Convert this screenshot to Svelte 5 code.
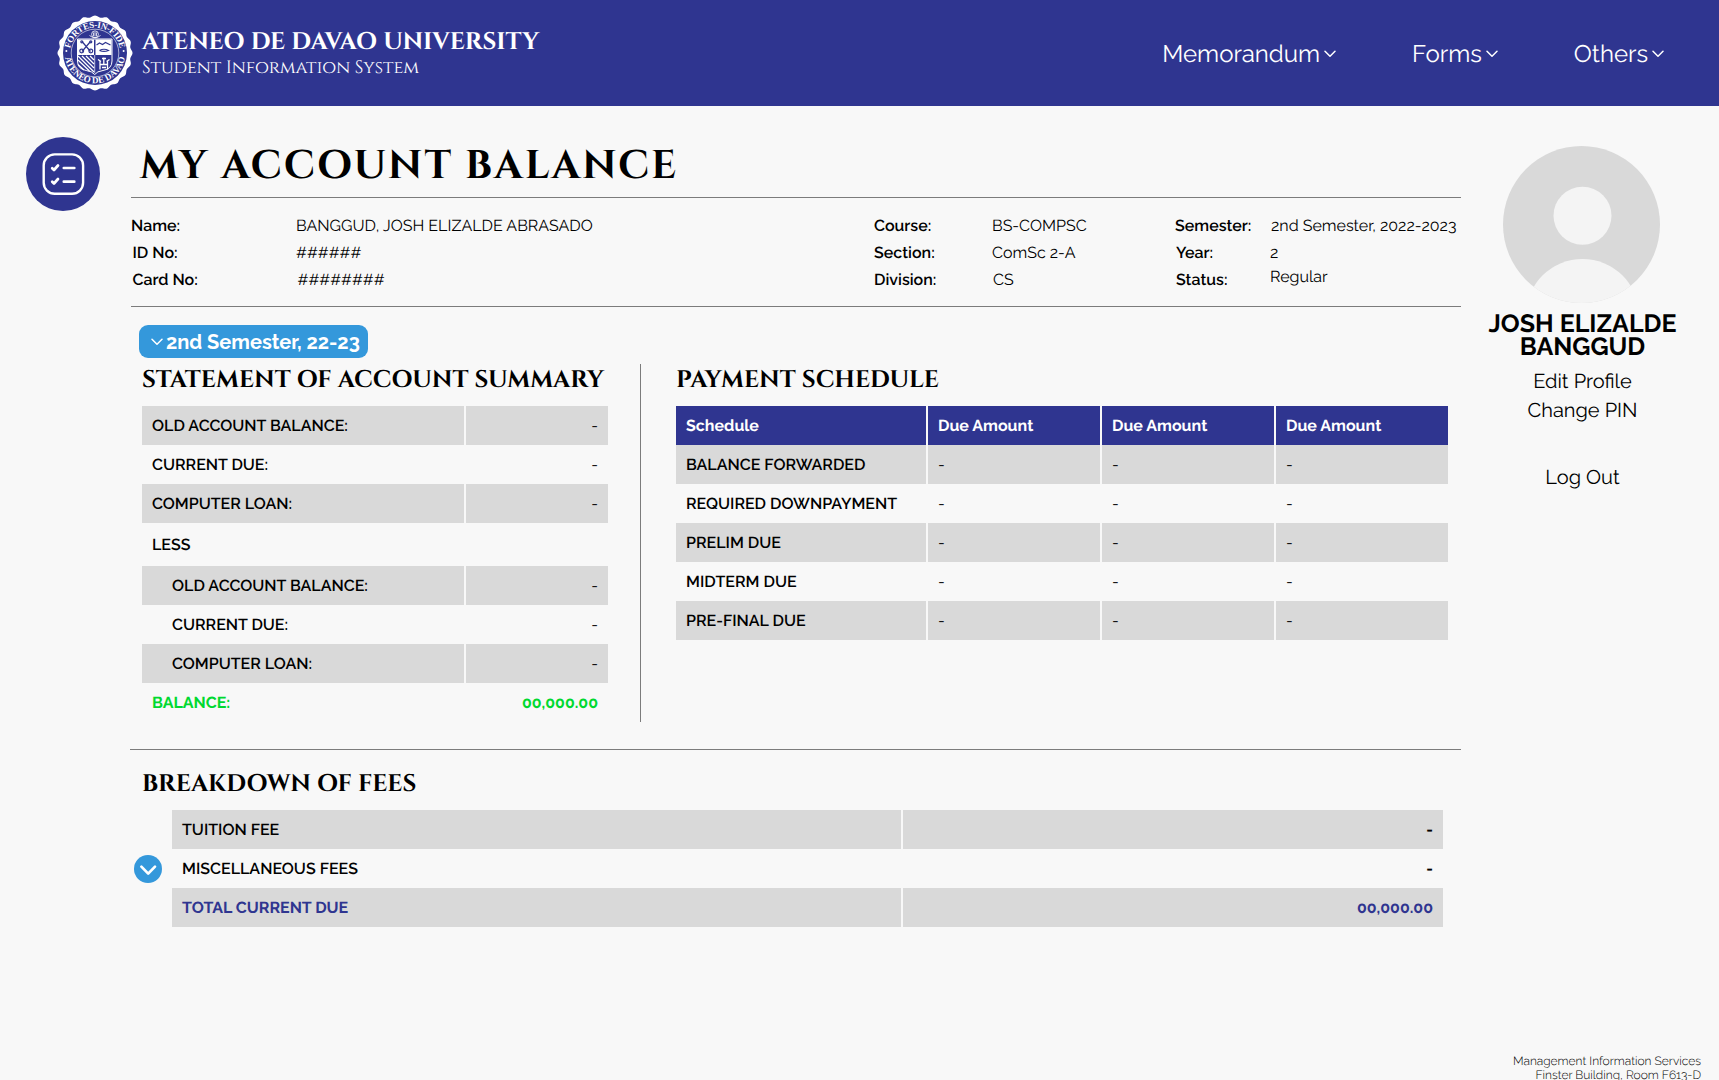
<script>
  const menus = ['Memorandum', 'Forms', 'Others'];

  const details = [
    [{ t: 'Name:' }, { t: 'BANGGUD, JOSH ELIZALDE ABRASADO' }, { t: 'Course:' }, { t: 'BS-COMPSC' }, { t: 'Semester:' }, { t: '2nd Semester, 2022-2023', nudge: 'one' }],
    [{ t: 'ID No:', nudge: 'more' }, { t: '######' }, { t: 'Section:' }, { t: 'ComSc 2-A' }, { t: 'Year:', nudge: 'one' }, { t: '2' }],
    [{ t: 'Card No:', nudge: 'more' }, { t: '########', nudge: 'more' }, { t: 'Division:' }, { t: 'CS', nudge: 'one' }, { t: 'Status:', nudge: 'one' }, { t: 'Regular', raised: true }],
  ];

  const summary = [
    { label: 'OLD ACCOUNT BALANCE:', value: '-', shaded: true },
    { label: 'CURRENT DUE:', value: '-' },
    { label: 'COMPUTER LOAN:', value: '-', shaded: true },
    { label: 'LESS', value: '', tall: true },
    { label: 'OLD ACCOUNT BALANCE:', value: '-', shaded: true, indent: true },
    { label: 'CURRENT DUE:', value: '-', indent: true },
    { label: 'COMPUTER LOAN:', value: '-', shaded: true, indent: true },
  ];

  const schedule = ['BALANCE FORWARDED', 'REQUIRED DOWNPAYMENT', 'PRELIM DUE', 'MIDTERM DUE', 'PRE-FINAL DUE'];

  // Scalloped rim of the seal.
  const rim =
    Array.from({ length: 241 }, (_, i) => {
      const a = (i / 240) * Math.PI * 2;
      const r = 36.6 + 0.9 * Math.cos(a * 20);
      return `${i ? 'L' : 'M'}${(38 + r * Math.sin(a)).toFixed(2)} ${(38 - r * Math.cos(a)).toFixed(2)}`;
    }).join('') + 'Z';
</script>

{#snippet chevron()}
  <svg class="chevron" viewBox="0 0 12 8"><path d="M1 1.200l5 5 5-5" /></svg>
{/snippet}

<div class="page">
  <header>
    <svg class="seal" viewBox="0 0 76 76">
      <defs>
        <path id="arc-top" d="M14.100 46A25.200 25.200 0 1 1 61.900 46" />
        <path id="arc-bottom" d="M8.300 32A30.300 30.300 0 1 0 67.700 32" />
      </defs>
      <path d={rim} fill="#fff" />
      <circle cx="38" cy="38" r="32" fill="#2f3590" />
      <circle cx="38" cy="38" r="23.800" fill="none" stroke="#fff" stroke-width=".6" />
      <text class="ring"><textPath href="#arc-top" startOffset="50%" textLength="70">FORTES-IN-FIDE</textPath></text>
      <text class="ring"><textPath href="#arc-bottom" startOffset="50%" textLength="86">ATENEO DE DAVAO</textPath></text>
      <circle cx="9.400" cy="36" r="1" fill="#fff" />
      <circle cx="66.600" cy="36" r="1" fill="#fff" />
      <g fill="none" stroke="#fff" stroke-width=".8">
        <circle cx="38" cy="19.300" r="3.400" />
        <path d="M36.500 17.500v3.700M38 17v4.500M39.500 17.500v3.700M32.500 20.500q5.500 4.500 11 0" />
      </g>
      <path d="M20.500 24h34.500v22q0 8-9 9.500-6 .7-8.300 4-2.500-3.300-8.500-4-8.700-1.500-8.700-9.500z" fill="#2f3590" stroke="#fff" />
      <path d="M21 24.500h16v15.500H21z" fill="#fff" />
      <path d="M38.500 24.500h16v15.500h-16z" fill="#fff" />
      <g stroke="#2f3590" fill="none" stroke-width="1.200">
        <path d="M25 26.500l8.500 10M33.500 26.500l-8.500 10" />
        <circle cx="24.700" cy="36" r="1.900" />
        <circle cx="33.800" cy="36" r="1.900" />
        <circle cx="24.800" cy="26.800" r="1" />
        <circle cx="33.800" cy="26.800" r="1" />
        <path d="M39.500 30l3-2 3 1.500 3-2 5 2.500M42.500 35.500q4.500-2.500 9 0-4.500 1.800-9 0" />
      </g>
      <g stroke="#fff" fill="none" stroke-width="1.300">
        <path d="M21 41l16 16M21 45l11.500 11M21 49.500l6 5.500M25 41L37 53M29 41l8 8M33 41l4 4" />
        <path d="M43 46v8.500M50.500 46v8.500M43 49.500h7.500M41 44.500l3 2M52.500 44.500l-3 2M45 52.500h4M46.800 42.500v7M45 43.500h4" />
        <path d="M37.700 40v18" stroke-width=".7" />
      </g>
    </svg>
    <div class="brand">
      <div class="university">ATENEO DE DAVAO UNIVERSITY</div>
      <div class="system">Student Information System</div>
    </div>
    <nav>
      {#each menus as label}
        <a href="#menu">{label}{@render chevron()}</a>
      {/each}
    </nav>
  </header>

  <main>
    <aside class="rail">
      <svg class="badge" viewBox="0 0 74 74">
        <circle cx="37" cy="37" r="37" fill="#2f3590" />
        <g fill="none" stroke="#fff" stroke-linecap="round" stroke-linejoin="round">
          <rect x="17.700" y="17.400" width="39.400" height="39.400" rx="11" stroke-width="2.400" />
          <path d="M26.200 31.200l1.800 1.800 4-4.500M26.200 44.700l1.800 1.800 4-4.500M37.800 31h10.500M37.800 44.700h10.500" stroke-width="2.700" />
        </g>
      </svg>
    </aside>

    <section class="content">
      <h1>MY ACCOUNT BALANCE</h1>

      <div class="details">
        {#each details as row}
          {#each row as cell, i}
            <div class={cell.nudge} class:strong={i % 2 === 0} class:raised={cell.raised}>{cell.t}</div>
          {/each}
        {/each}
      </div>

      <button class="term">{@render chevron()}2nd Semester, 22-23</button>

      <div class="split">
        <div class="left">
          <h2>STATEMENT OF ACCOUNT SUMMARY</h2>
          {#each summary as r}
            <div class="row two" class:shaded={r.shaded} class:tall={r.tall}>
              <div class:indent={r.indent}>{r.label}</div>
              <div class="value">{r.value}</div>
            </div>
          {/each}
          <div class="row two balance">
            <div>BALANCE:</div>
            <div class="value">00,000.00</div>
          </div>
        </div>

        <div class="right">
          <h2>PAYMENT SCHEDULE</h2>
          <div class="row four head">
            <div>Schedule</div>
            {#each [1, 2, 3] as _}
              <div>Due Amount</div>
            {/each}
          </div>
          {#each schedule as label, i}
            <div class="row four" class:shaded={i % 2 === 0}>
              <div>{label}</div>
              <div class="dash">-</div>
              <div class="dash">-</div>
              <div class="dash">-</div>
            </div>
          {/each}
        </div>
      </div>

      <div class="fees">
        <h2>BREAKDOWN OF FEES</h2>
        <div class="fee-grid">
          <button class="expand" aria-label="Expand miscellaneous fees">
            <svg viewBox="0 0 28 28"><circle cx="14" cy="14" r="14" fill="#3498db" /><path d="M7.400 11.600l6.800 7 6.800-7" fill="none" stroke="#fff" stroke-width="2.700" stroke-linecap="round" stroke-linejoin="round" /></svg>
          </button>
          <div class="fee-table">
            <div class="row wide shaded"><div>TUITION FEE</div><div class="value bold">-</div></div>
            <div class="row wide"><div>MISCELLANEOUS FEES</div><div class="value bold">-</div></div>
            <div class="row wide shaded total"><div>TOTAL CURRENT DUE</div><div class="value">00,000.00</div></div>
          </div>
        </div>
      </div>
    </section>

    <aside class="profile">
      <svg class="avatar" viewBox="0 0 157 157">
        <defs><clipPath id="face"><circle cx="78.500" cy="78.500" r="78.500" /></clipPath></defs>
        <g clip-path="url(#face)">
          <rect width="157" height="157" fill="#d9d9d9" />
          <circle cx="79.500" cy="69.700" r="29" fill="#f4f4f4" />
          <ellipse cx="79.500" cy="168" rx="56" ry="55" fill="#f4f4f4" />
        </g>
      </svg>
      <div class="fullname">JOSH ELIZALDE<br />BANGGUD</div>
      <a href="#edit">Edit Profile</a>
      <a href="#pin">Change PIN</a>
      <a class="logout" href="#out">Log Out</a>
      <footer>Management Information Services<br />Finster Building, Room F613-D</footer>
    </aside>
  </main>
</div>

<style>
  :global(body) {
    overflow: hidden;
    background: #f8f8f8;
  }
  .page {
    width: 1719px;
    height: 1080px;
    overflow: hidden;
    display: flex;
    flex-direction: column;
    background: #f8f8f8;
    color: #000;
    font-family: Raleway, Lato, 'Open Sans', sans-serif;
    font-size: 16px;
    text-rendering: geometricPrecision;
  }
  .page,
  .page :global(*) {
    box-sizing: border-box;
  }
  a {
    color: inherit;
    text-decoration: none;
  }
  button {
    border: 0;
    padding: 0;
    font: inherit;
    color: inherit;
    background: none;
  }
  header {
    flex: none;
    height: 106px;
    padding: 0 55px 0 57px;
    display: flex;
    align-items: flex-start;
    background: #2f3590;
    color: #fff;
  }
  .seal {
    flex: none;
    width: 76px;
    height: 76px;
    margin-top: 15px;
  }
  .ring {
    font: bold 9px 'Liberation Serif', serif;
    fill: #fff;
    text-anchor: middle;
  }
  .brand {
    padding: 27px 0 0 9px;
    font-family: Cinzel, 'Liberation Serif', serif;
  }
  .university {
    height: 30px;
    line-height: 31px;
    font-size: 24px;
    font-weight: 700;
  }
  .system {
    height: 22px;
    line-height: 22px;
    font-size: 18px;
  }
  nav {
    margin-left: auto;
    display: flex;
    gap: 76px;
    padding-top: 39px;
    font-size: 24px;
    line-height: 30px;
  }
  nav a {
    display: flex;
    align-items: center;
    gap: 4px;
  }
  .chevron {
    flex: none;
    width: 12px;
    height: 8px;
    fill: none;
    stroke: #fff;
    stroke-width: 1.500;
    stroke-linecap: round;
    stroke-linejoin: round;
  }
  main {
    flex: 1;
    display: grid;
    grid-template-columns: 131px 1330px 258px;
  }
  .rail {
    padding: 31px 0 0 26px;
  }
  .badge {
    display: block;
    width: 74px;
    height: 74px;
  }
  h1,
  h2 {
    margin: 0;
    font-family: Cinzel, 'Liberation Serif', serif;
    font-weight: 700;
  }
  h1 {
    height: 92px;
    padding: 35px 0 0 9px;
    border-bottom: 1px solid #7c7c7c;
    font-size: 40px;
    letter-spacing: 2px;
    line-height: 50px;
  }
  .details {
    height: 109px;
    padding-top: 14px;
    border-bottom: 1px solid #7c7c7c;
    display: grid;
    grid-template-columns: 165px 578px 118px 183px 95px 1fr;
    grid-auto-rows: 27px;
    line-height: 27px;
    white-space: nowrap;
  }
  .strong {
    font-weight: 600;
  }
  .one {
    padding-left: 1px;
  }
  .more {
    padding-left: 1.500px;
  }
  .raised {
    line-height: 21px;
  }
  .term {
    width: 229px;
    height: 33px;
    margin: 18px 0 0 8px;
    padding: 1px 0 0 12px;
    display: flex;
    align-items: center;
    gap: 3px;
    border-radius: 9px;
    background: #3498db;
    color: #fff;
    font-size: 20px;
    font-weight: 700;
    line-height: 33px;
    white-space: nowrap;
  }
  .split {
    height: 358px;
    margin-top: 6px;
    display: grid;
    grid-template-columns: 509px 1fr;
  }
  .left {
    padding-left: 11px;
  }
  .right {
    padding-left: 35px;
    border-left: 1px solid #7c7c7c;
    margin-right: 13px;
  }
  h2 {
    height: 42px;
    font-size: 24px;
    line-height: 33px;
    white-space: nowrap;
  }
  .row {
    display: grid;
    gap: 2px;
    height: 39px;
    line-height: 40px;
    font-weight: 600;
  }
  .row > div {
    height: 39px;
    padding: 0 10px;
  }
  .two {
    width: 466px;
    grid-template-columns: 322px 142px;
  }
  .four {
    grid-template-columns: 250px repeat(3, 172px);
  }
  .wide {
    grid-template-columns: 729px 1fr;
  }
  .shaded > div {
    background: #d9d9d9;
  }
  .tall {
    height: 43px;
    line-height: 44px;
  }
  .row > .indent {
    padding-left: 30px;
  }
  .value {
    text-align: right;
    font-weight: 400;
  }
  .dash {
    font-weight: 400;
  }
  .balance,
  .balance .value {
    color: #00d930;
    font-weight: 700;
  }
  .head {
    color: #fff;
    font-weight: 700;
  }
  .head > div {
    background: #2f3590;
  }
  .fees {
    margin: 27px 0 0 -1px;
    border-top: 1px solid #7c7c7c;
    padding: 18px 18px 0 0;
  }
  .fees h2 {
    padding-left: 12px;
  }
  .fee-grid {
    display: grid;
    grid-template-columns: 42px 1271px;
    align-items: center;
  }
  .expand {
    width: 28px;
    height: 28px;
    margin-left: 4px;
    margin-top: 1px;
  }
  .expand svg {
    display: block;
  }
  .value.bold {
    font-weight: 700;
  }
  .total,
  .total .value {
    color: #2f3590;
    font-weight: 700;
  }
  .profile {
    display: flex;
    flex-direction: column;
    align-items: center;
    padding: 40px 15px 0 0;
  }
  .avatar {
    flex: none;
    width: 157px;
    height: 157px;
    margin-right: 2px;
  }
  .fullname {
    margin: 9px 0 9px;
    text-align: center;
    font-size: 25px;
    font-weight: 700;
    line-height: 23px;
  }
  .profile a {
    height: 29px;
    line-height: 29px;
    font-size: 20px;
  }
  .profile .logout {
    margin-top: 38px;
  }
  footer {
    align-self: stretch;
    margin-top: auto;
    padding-right: 3px;
    height: 26px;
    text-align: right;
    font-size: 12px;
    font-weight: 300;
    line-height: 14px;
  }
</style>
